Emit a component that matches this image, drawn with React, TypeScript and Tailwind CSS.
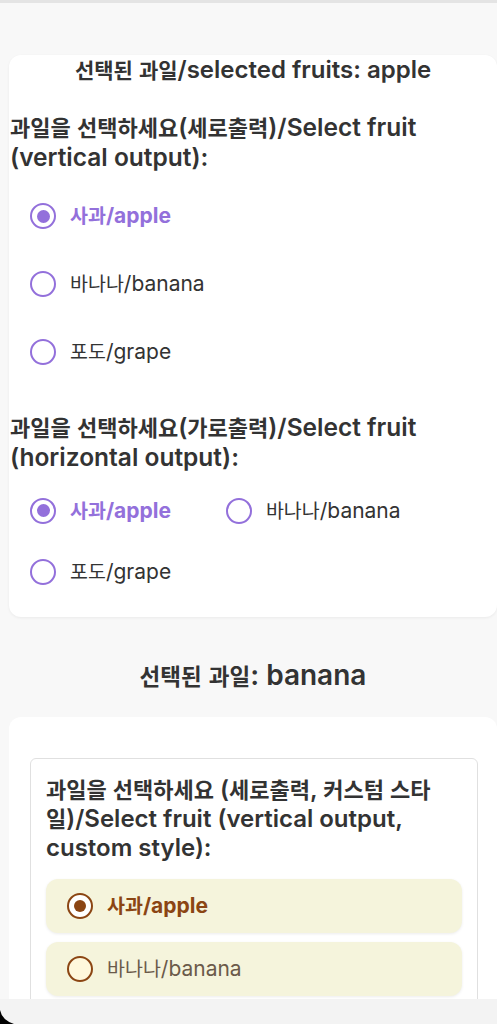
import { useState } from "react";

type Fruit = { value: string; label: string };

const fruits: Fruit[] = [
  { value: "apple", label: "사과/apple" },
  { value: "banana", label: "바나나/banana" },
  { value: "grape", label: "포도/grape" },
];

// Hangul in the reference runs narrower than the latin text, so it gets its own size
function Mixed({ text, ko }: { text: string; ko: string }) {
  const parts = text.split(/([\u1100-\u11FF\u3130-\u318F\uAC00-\uD7AF]+)/);
  return (
    <>
      {parts.map((p, i) =>
        i % 2 === 1 ? (
          <span key={i} className={ko}>
            {p}
          </span>
        ) : (
          p
        )
      )}
    </>
  );
}

function PurpleRadio({ fruit, checked, onPick }: { fruit: Fruit; checked: boolean; onPick: () => void }) {
  return (
    <label onClick={onPick} className="flex items-center gap-[14px] cursor-pointer">
      <span className="w-[26px] h-[26px] rounded-full border-[2.5px] border-[#9370db] flex items-center justify-center bg-white">
        {checked && <span className="w-[13px] h-[13px] rounded-full bg-[#9370db]" />}
      </span>
      <span className={checked ? "text-[21px] font-bold text-[#9370db]" : "text-[21px] text-[#333]"}>
        <Mixed text={fruit.label} ko="text-[19.5px] leading-none" />
      </span>
    </label>
  );
}

function BrownRadio({ fruit, checked, onPick }: { fruit: Fruit; checked: boolean; onPick: () => void }) {
  return (
    <label
      onClick={onPick}
      className="flex items-center gap-[14px] h-[54px] pl-[21px] rounded-xl bg-[#f5f4dc] shadow-[0_1px_3px_rgba(0,0,0,0.08)] cursor-pointer"
    >
      <span
        className={
          "w-[26px] h-[26px] rounded-full border-[2.5px] border-[#8b4513] flex items-center justify-center " +
          (checked ? "bg-white" : "bg-[#fff8dc]")
        }
      >
        {checked && <span className="w-[12px] h-[12px] rounded-full bg-[#8b4513]" />}
      </span>
      <span className={checked ? "text-[21px] font-bold text-[#8b4513]" : "text-[21px] text-[#6b5a4a]"}>
        <Mixed text={fruit.label} ko="text-[19.5px] leading-none" />
      </span>
    </label>
  );
}

export default function App() {
  const [first, setFirst] = useState("apple");
  const [second] = useState("banana");
  const [custom, setCustom] = useState("apple");

  return (
    <div className="min-h-screen bg-[#f8f8f8] border-t-[3px] border-[#e4e4e4] text-[#333] font-['Inter','Noto_Sans_CJK_KR',sans-serif]">
      <div className="pt-[52px] pl-[9px]">
        {/* first card */}
        <div className="w-[488px] bg-white rounded-xl shadow-[0_1px_3px_rgba(0,0,0,0.06)] pb-[15px]">
          <h2 className="text-center text-[24px] leading-[30px] font-semibold">
            <Mixed text={`선택된 과일/selected fruits: ${first}`} ko="text-[21px] leading-none font-bold" />
          </h2>

          <div className="mt-[27px] pl-[1px] text-[24.5px] leading-[30px] font-semibold">
            <Mixed text="과일을 선택하세요(세로출력)/Select fruit (vertical output):" ko="text-[22px] leading-none font-bold" />
          </div>
          <div className="mt-[10px] pl-[21px] flex flex-col">
            {fruits.map(f => (
              <div key={f.value} className="h-[68px] flex items-center">
                <PurpleRadio fruit={f} checked={first === f.value} onPick={() => setFirst(f.value)} />
              </div>
            ))}
          </div>

          <div className="mt-[26px] pl-[1px] text-[24.5px] leading-[30px] font-semibold">
            <Mixed text="과일을 선택하세요(가로출력)/Select fruit (horizontal output):" ko="text-[22px] leading-none font-bold" />
          </div>
          <div className="mt-[8px] pl-[21px] flex flex-wrap gap-x-[55px]">
            {fruits.map(f => (
              <div key={f.value} className="h-[61px] flex items-center">
                <PurpleRadio fruit={f} checked={first === f.value} onPick={() => setFirst(f.value)} />
              </div>
            ))}
          </div>
        </div>

        <h2 className="mt-[42px] w-[488px] text-center text-[28px] leading-[32px] font-semibold">
          <Mixed text={`선택된 과일: ${second}`} ko="text-[22.5px] leading-none font-bold" />
        </h2>

        {/* second card */}
        <div className="mt-[26px] w-[488px] bg-white rounded-xl pt-[41px] pl-[21px] pr-[19px] pb-[20px]">
          <div className="border border-[#e0e0e0] rounded-md px-[15px] pt-[16px] pb-[16px]">
            <div className="text-[24px] leading-[29px] font-semibold">
              <Mixed
                text="과일을 선택하세요 (세로출력, 커스텀 스타일)/Select fruit (vertical output, custom style):"
                ko="text-[22px] leading-none font-bold"
              />
            </div>
            <div className="mt-[17px] flex flex-col gap-[9px]">
              {fruits.map(f => (
                <BrownRadio key={f.value} fruit={f} checked={custom === f.value} onPick={() => setCustom(f.value)} />
              ))}
            </div>
          </div>
        </div>
      </div>

      {/* bottom bar over the page */}
      <div className="fixed bottom-0 left-0 right-0 h-[25px] bg-[#f3f3f3]">
        <svg className="absolute bottom-0 left-0" width="14" height="14" viewBox="0 0 14 14">
          <path d="M0 0 Q2 10 14 14 L0 14 Z" fill="#000" />
        </svg>
      </div>
    </div>
  );
}
